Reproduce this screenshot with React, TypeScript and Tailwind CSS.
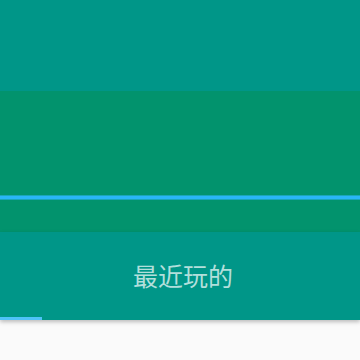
export default function App() {
  return (
    <div className="w-[360px] h-[360px] flex flex-col bg-[#fafafa] overflow-hidden" style={{ fontFamily: '"Noto Sans", "Noto Sans CJK SC", sans-serif' }}>
      <div className="h-[91px] shrink-0 bg-[#009688]" />
      <div className="h-[141px] shrink-0 bg-[#02936d] pt-[104px]">
        <div className="h-[5px] bg-[#29b6f6] border-y border-[#1aa6b8]" />
      </div>
      <div className="relative h-[88px] shrink-0 bg-[#009688] flex items-center justify-center pl-[6px] shadow-[0_2px_4px_rgba(0,0,0,0.25)] z-10">
        <span className="text-[25px] leading-none text-[#b2dfdb]">最近玩的</span>
        <div className="absolute left-0 bottom-0 w-[42px] h-[3px] bg-[#4fc3f7]" />
      </div>
      <div className="flex-1 bg-[#fafafa]" />
    </div>
  )
}
